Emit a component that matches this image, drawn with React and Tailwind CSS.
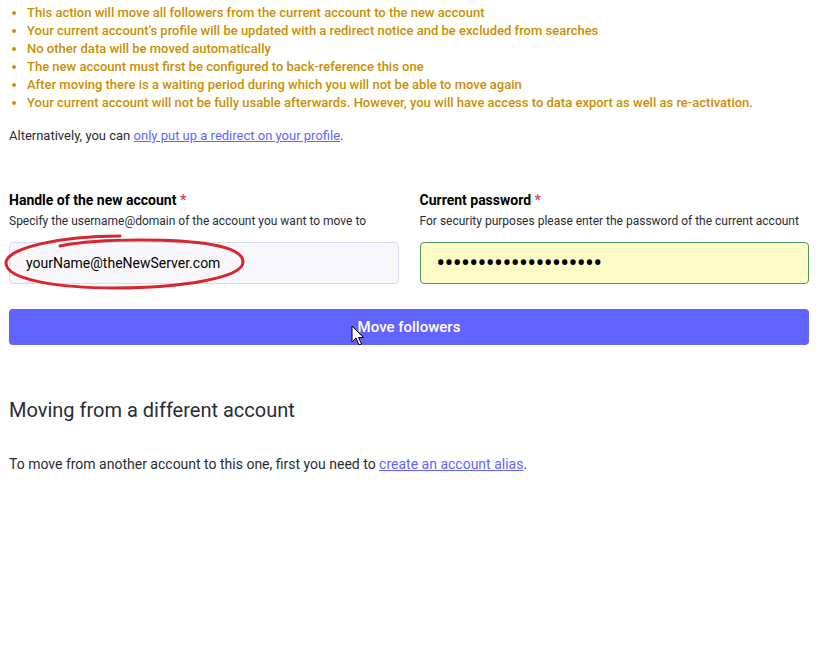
import React from 'react';

const notes = [
  'This action will move all followers from the current account to the new account',
  "Your current account\u2019s profile will be updated with a redirect notice and be excluded from searches",
  'No other data will be moved automatically',
  'The new account must first be configured to back-reference this one',
  'After moving there is a waiting period during which you will not be able to move again',
  'Your current account will not be fully usable afterwards. However, you will have access to data export as well as re-activation.',
];

const Field = ({ label, hint, children }) => (
  <div className="flex-1 min-w-0">
    <div className="text-[14px] leading-[18px] font-bold text-black">
      {label} <span className="text-[#df405a]">*</span>
    </div>
    <div className="mt-[4px] text-[12px] leading-[16px] text-[#282c37]">{hint}</div>
    <div className="mt-[13px] relative">{children}</div>
  </div>
);

const App = () => {
  return (
    <div className="w-[818px] h-[652px] bg-white px-[9px] pt-[4px] overflow-hidden" style={{ fontFamily: 'Roboto, "Liberation Sans", sans-serif' }}>
      <ul className="pl-[18px]">
        {notes.map((n) => (
          <li key={n} className="list-disc text-[13px] leading-[18px] font-medium text-[#ca8f04] marker:text-[#ca8f04]">
            {n}
          </li>
        ))}
      </ul>

      <p className="mt-[15px] text-[13px] leading-[18px] text-[#282c37]">
        Alternatively, you can{' '}
        <a href="#" className="text-[#6364ff] underline">only put up a redirect on your profile</a>.
      </p>

      <div className="mt-[46px] flex gap-[21px]">
        <Field label="Handle of the new account" hint="Specify the username@domain of the account you want to move to">
          <input
            readOnly
            value="yourName@theNewServer.com"
            className="w-full h-[42px] px-[16px] rounded-[4px] border border-[#dadaf3] bg-[#f8f8fc] text-[14px] text-black outline-none"
          />
          <svg className="absolute pointer-events-none" style={{ left: -9, top: -10, width: 250, height: 62 }} viewBox="0 0 250 62" fill="none">
            <path
              d="M120 4 C 60 4, 6 16, 6 31 C 6 48, 60 56, 115 56 C 180 56, 243 46, 243 30 C 243 14, 200 8, 140 8 C 110 8, 80 10, 60 14"
              stroke="#d9262e"
              strokeWidth="3"
              strokeLinecap="round"
            />
          </svg>
        </Field>
        <Field label="Current password" hint="For security purposes please enter the password of the current account">
          <input
            readOnly
            type="password"
            value="yourpassword12345678"
            className="w-full h-[42px] px-[16px] rounded-[4px] border border-[#4d9a5a] bg-[#fefcc6] text-[23px] font-bold text-black outline-none"
          />
        </Field>
      </div>

      <button className="mt-[25px] w-full h-[36px] rounded-[4px] bg-[#6364ff] text-white text-[15px] font-medium relative">
        Move followers
        <svg className="absolute" style={{ left: 342, top: 16, width: 14, height: 22 }} viewBox="0 0 14 22">
          <path d="M1 1 L1 17 L5 13 L8 20 L10.5 19 L7.5 12.5 L12.5 12.5 Z" fill="#fff" stroke="#000" strokeWidth="1" strokeLinejoin="round" />
        </svg>
      </button>

      <h3 className="mt-[53px] text-[20px] leading-[24px] text-[#282c37]">Moving from a different account</h3>

      <p className="mt-[33px] text-[14px] leading-[18px] text-[#282c37]">
        To move from another account to this one, first you need to{' '}
        <a href="#" className="text-[#6364ff] underline">create an account alias</a>.
      </p>
    </div>
  );
};

export default App;
